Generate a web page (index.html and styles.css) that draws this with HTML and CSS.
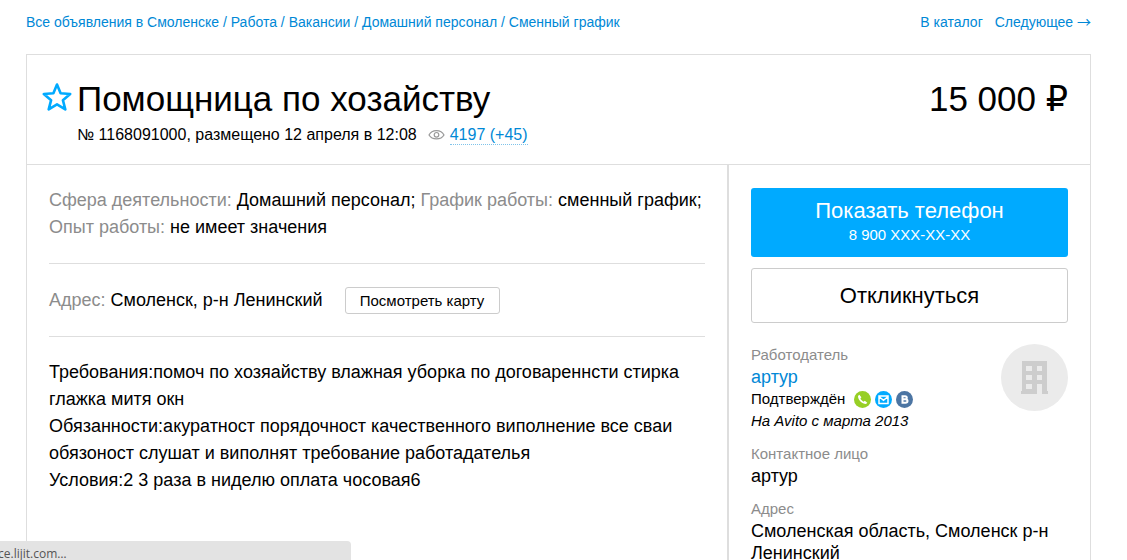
FILE: index.html
```
<!DOCTYPE html>
<html lang="ru">
<head>
<meta charset="utf-8">
<title>Помощница по хозайству</title>
<link rel="stylesheet" href="styles.css">
</head>
<body>
<div class="page">
  <div class="topbar">
    <nav class="crumbs"><a href="#">Все объявления в Смоленске</a> / <a href="#">Работа</a> / <a href="#">Вакансии</a> / <a href="#">Домашний персонал</a> / <a href="#">Сменный график</a></nav>
    <nav class="pager"><a href="#">В каталог</a><a href="#">Следующее <span class="arrow">→</span></a></nav>
  </div>
  <main class="card">
    <header class="head">
      <button class="fav" type="button" aria-label="В избранное">
        <svg width="30" height="30" viewBox="0 0 30 30" fill="none" stroke="#0af" stroke-width="2.6" stroke-linejoin="round"><path d="M15 2.5l3.6 8.8 9.6.7-7.3 6.2 2.4 9.2-8.3-5-8.3 5 2.4-9.2L1.800 12l9.600-.7z"/></svg>
      </button>
      <div class="headline">
        <h1 class="title">Помощница по хозайству</h1>
        <div class="meta">
          <span>№ 1168091000, размещено 12 апреля в 12:08</span>
          <svg width="17" height="12" viewBox="0 0 17 12" fill="none" stroke="#999" stroke-width="1.2"><path d="M1 6C4 .2 13 .2 16 6 13 11.200 4 11.200 1 6z"/><circle cx="8.500" cy="5.800" r="2.300"/></svg>
          <a class="views" href="#">4197 (+45)</a>
        </div>
      </div>
      <div class="price">15 000 <span class="rub">₽</span></div>
    </header>
    <div class="columns">
      <section class="details">
        <p class="block"><span class="label">Сфера деятельности:</span> Домашний персонал; <span class="label">График работы:</span> сменный график; <span class="label">Опыт работы:</span> не имеет значения</p>
        <div class="block address"><span><span class="label">Адрес:</span> Смоленск, р-н Ленинский</span><button class="map" type="button">Посмотреть карту</button></div>
        <p class="block">Требования:помоч по хозяайству влажная уборка по договареннсти стирка глажка митя окн<br>Обязанности:акуратност порядочност качественного виполнение все сваи обязоност слушат и виполнят требование работадателья<br>Условия:2 3 раза в ниделю оплата чосовая6</p>
      </section>
      <aside class="side">
        <button class="phone" type="button">Показать телефон<span class="number">8 900 XXX-XX-XX</span></button>
        <button class="reply" type="button">Откликнуться</button>
        <div class="seller">
          <div>
            <div class="caption">Работодатель</div>
            <a class="name" href="#">артур</a>
            <div class="verified">Подтверждён
              <span class="badges">
                <svg width="17" height="17" viewBox="0 0 17 17"><circle cx="8.500" cy="8.500" r="8.500" fill="#97cf26"/><path d="M5.300 3.700L4 5c0 4 4 8 8 8l1.300-1.300-2.500-2-1.300 1C8.200 10 7 8.800 6.400 7.500l1-1.300z" fill="#fff"/></svg>
                <svg width="17" height="17" viewBox="0 0 17 17"><circle cx="8.500" cy="8.500" r="8.500" fill="#0af"/><path d="M4 5h9v7.500H4zM4.500 6l4 3.300 4-3.300" fill="none" stroke="#fff" stroke-width="1.500"/></svg>
                <svg width="17" height="17" viewBox="0 0 17 17"><circle cx="8.500" cy="8.500" r="8.500" fill="#4c75a3"/><path d="M6.500 5.200H9c2.400 0 2.400 3.100 0 3.100H6.500zM6.500 8.300h2.900c2.800 0 2.800 3.500 0 3.500H6.500z" fill="none" stroke="#fff" stroke-width="2"/></svg>
              </span>
            </div>
            <div class="since">На Avito с марта 2013</div>
          </div>
          <svg class="avatar" width="67" height="67" viewBox="0 0 67 67"><circle cx="33.500" cy="33.500" r="33.500" fill="#ebebeb"/><path fill="#cdcdcd" d="M21 17h25v30h1v3H20v-3h1z"/><path fill="#ebebeb" d="M25 22h6v5h-6zM36 22h5v5h-5zM25 31h6v5h-6zM36 31h5v5h-5zM25 40h6v5h-6zM36 40h5v10h-5z"/></svg>
        </div>
        <div class="field"><div class="caption">Контактное лицо</div><div class="value">артур</div></div>
        <div class="field"><div class="caption">Адрес</div><div class="value">Смоленская область, Смоленск р-н Ленинский</div></div>
      </aside>
    </div>
  </main>
</div>
<div class="status"><span class="status-text">ce.lijit.com…</span></div>
</body>
</html>
```
FILE: styles.css
```
* { box-sizing: border-box; }
body { margin: 0; background: #fff; color: #000; font-family: "Liberation Sans", Arial, sans-serif; font-size: 18px; line-height: 27px; }
html { overflow: hidden; }
a { color: #0088d6; text-decoration: none; }
button { font-family: inherit; color: #000; padding: 0; cursor: pointer; }
.page { padding: 12px 36px 0 26px; }
.topbar { display: flex; justify-content: space-between; margin-bottom: 22px; font-size: 14px; line-height: 20px; color: #0088d6; }
.pager { display: flex; gap: 12px; }
.arrow { font-family: "Noto Sans CJK JP", sans-serif; line-height: 1; }
.card { border: 1px solid #dedede; }
.head { display: flex; align-items: flex-start; height: 109px; padding: 24px 22px 0 15px; }
.fav { display: flex; margin-top: 3px; border: 0; background: none; }
.headline { flex: 1; padding-left: 5px; }
.title { margin: 0; font-size: 35px; line-height: 40px; font-weight: 400; }
.meta { display: flex; align-items: center; margin-top: 6px; font-size: 16px; line-height: 20px; }
.meta svg { margin: 0 5px 0 11px; }
.views { border-bottom: 1px dotted #7fc3ea; line-height: 18px; }
.price { font-size: 35px; line-height: 40px; }
.rub { font-family: "DejaVu Sans", sans-serif; line-height: 1; }
.columns { display: grid; grid-template-columns: minmax(0, 1fr) 363px; border-top: 1px solid #dedede; }
.details { padding: 0 22px; }
.block { margin: 0; padding: 22px 0; border-bottom: 1px solid #dedede; }
.block:last-child { border-bottom: 0; }
.label, .caption { color: #8c8c8c; }
.address { display: flex; align-items: center; gap: 22px; line-height: 28px; }
.map { width: 155px; height: 27px; border: 1px solid #ccc; border-radius: 3px; background: #fff; font-size: 15px; }
.side { padding: 23px 22px; border-left: 2px solid #dedede; }
.phone, .reply { display: block; width: 100%; border-radius: 3px; font-size: 22px; }
.phone { height: 69px; border: 0; background: #0af; color: #fff; line-height: 24px; }
.number { display: block; font-size: 15px; }
.reply { height: 55px; margin-top: 11px; border: 1px solid #ccc; background: #fff; }
.seller { display: flex; justify-content: space-between; margin-top: 21px; line-height: 22px; }
.name { display: block; }
.caption, .verified, .since { font-size: 15px; line-height: 22px; }
.since { font-style: italic; }
.verified { display: flex; gap: 9px; }
.badges { display: flex; align-items: center; gap: 4px; }
.field { margin-top: 11px; line-height: 22px; }
.status { position: fixed; left: 0; bottom: 0; width: 351px; height: 19px; overflow: hidden; border-radius: 0 4px 0 0; background: #e3e3e3; color: #555; font: 12px/26px "Open Sans", sans-serif; }
.status-text { margin-left: -2px; }
```
